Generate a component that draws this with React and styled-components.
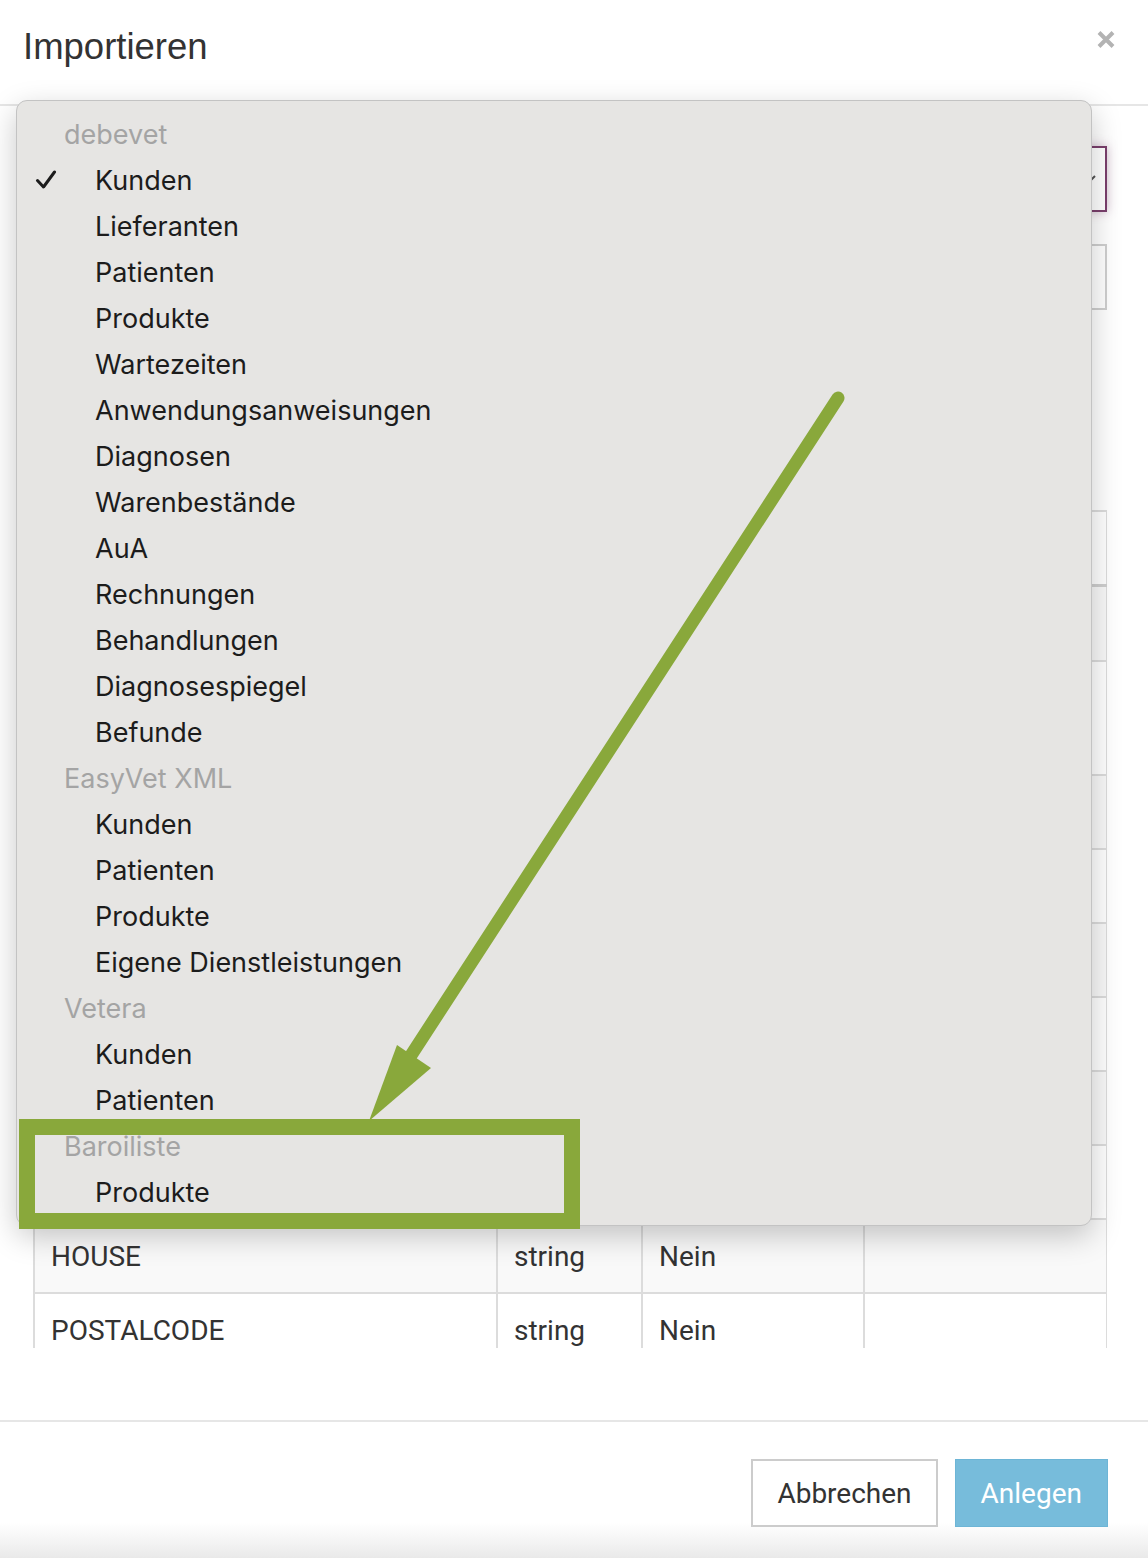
import React from 'react';
import styled, { createGlobalStyle } from 'styled-components';

const GlobalStyle = createGlobalStyle`
  html, body {
    margin: 0;
    padding: 0;
    background: #fff;
  }
  body {
    font-family: Roboto, "Liberation Sans", Arial, sans-serif;
    color: #333;
  }
  * {
    box-sizing: border-box;
  }
`;

const Page = styled.div`
  position: relative;
  width: 1148px;
  height: 1558px;
  overflow: hidden;
  background: #fff;
  display: flex;
  flex-direction: column;
`;

const Header = styled.header`
  height: 106px;
  border-bottom: 2px solid #e6e6e6;
  display: flex;
  justify-content: space-between;
  align-items: flex-start;
  padding: 25px 32px 0 23px;
`;

const Title = styled.h4`
  margin: 0;
  font-family: "Liberation Sans", Arial, sans-serif;
  font-weight: 400;
  font-size: 36.5px;
  line-height: 43px;
  color: #333;
`;

const CloseButton = styled.button`
  margin-top: 4px;
  padding: 0;
  border: 0;
  background: none;
  width: 20px;
  height: 21px;
  display: flex;
`;

const Body = styled.div`
  padding: 40px 41px 72px 33px;
  display: flex;
  flex-direction: column;
`;

const SelectBox = styled.div`
  height: 66px;
  border: 2px solid #7a3f6c;
  box-shadow: 0 0 10px rgba(122, 63, 108, 0.35);
  background: #fff;
  display: flex;
  align-items: center;
  justify-content: flex-end;
  padding-right: 8px;
`;

const InputBox = styled.div`
  margin-top: 32px;
  height: 66px;
  border: 2px solid #cfcfcf;
  background: #fff;
`;

const Spacer = styled.div`
  height: 200px;
`;

const TableWrap = styled.div`
  height: 838px;
  overflow: hidden;
`;

const Table = styled.table`
  width: 1073px;
  border-collapse: collapse;
  table-layout: fixed;
  font-size: 28px;
  color: #333;
`;

const Col = styled.col`
  width: ${({ $w }) => $w}px;
`;

const HeadCell = styled.th`
  height: 74px;
  text-align: left;
  font-weight: 700;
  padding: 0 16px;
  border: 2px solid #dcdcdc;
  border-bottom: 3px solid #cfcfcf;
`;

const Row = styled.tr`
  height: ${({ $h }) => $h}px;
  background: ${({ $striped }) => ($striped ? '#f9f9f9' : '#fff')};
`;

const Cell = styled.td`
  padding: 0 16px;
  border: 2px solid #dcdcdc;
  border-top: 2px solid #dcdcdc;
  vertical-align: middle;
`;

const Footer = styled.footer`
  flex: 1;
  border-top: 2px solid #e6e6e6;
  padding: 37px 40px 0 0;
  display: flex;
  justify-content: flex-end;
  align-items: flex-start;
  gap: 17px;
  background: linear-gradient(to bottom, #fff 0%, #fff 74%, #f4f4f4 88%, #e9e9e9 100%);
`;

const Button = styled.button`
  height: 68px;
  padding: 0 ${({ $primary }) => ($primary ? '25px' : '24px')};
  font-family: Roboto, "Liberation Sans", Arial, sans-serif;
  font-size: 28px;
  border: ${({ $primary }) => ($primary ? '1px solid #6db5d6' : '2px solid #cccccc')};
  background: ${({ $primary }) => ($primary ? '#77bcdb' : '#fff')};
  color: ${({ $primary }) => ($primary ? '#fff' : '#333')};
`;

const Menu = styled.div`
  position: absolute;
  left: 16px;
  top: 100px;
  width: 1076px;
  padding: 10px 0 10px;
  background: #e6e5e3;
  border: 1px solid #c3c3c3;
  border-radius: 11px;
  box-shadow: 0 10px 30px rgba(0, 0, 0, 0.22);
  font-family: Inter, "Noto Sans", sans-serif;
  font-size: 27px;
  z-index: 5;
`;

const MenuItem = styled.div`
  position: relative;
  height: 46px;
  display: flex;
  align-items: center;
  padding-left: ${({ $group }) => ($group ? '47px' : '78px')};
  color: ${({ $group }) => ($group ? '#a4a4a4' : '#1c1c1c')};
`;

const Check = styled.svg`
  position: absolute;
  left: 18px;
  top: 13px;
`;

const Highlight = styled.div`
  position: absolute;
  left: 19px;
  top: 1119px;
  width: 561px;
  height: 110px;
  border: 16px solid #89a83b;
  z-index: 6;
`;

const ArrowLayer = styled.svg`
  position: absolute;
  left: 0;
  top: 0;
  z-index: 7;
  pointer-events: none;
`;

const menu = [
  { group: 'debevet', items: ['Kunden', 'Lieferanten', 'Patienten', 'Produkte', 'Wartezeiten', 'Anwendungsanweisungen', 'Diagnosen', 'Warenbestände', 'AuA', 'Rechnungen', 'Behandlungen', 'Diagnosespiegel', 'Befunde'] },
  { group: 'EasyVet XML', items: ['Kunden', 'Patienten', 'Produkte', 'Eigene Dienstleistungen'] },
  { group: 'Vetera', items: ['Kunden', 'Patienten'] },
  { group: 'Baroiliste', items: ['Produkte'] },
];

// rows above HOUSE sit under the open menu, so they carry no visible text
const rows = [
  { name: '', type: '', req: '', h: 76 },
  { name: '', type: '', req: '', h: 114 },
  { name: '', type: '', req: '', h: 74 },
  { name: '', type: '', req: '', h: 74 },
  { name: '', type: '', req: '', h: 74 },
  { name: '', type: '', req: '', h: 74 },
  { name: '', type: '', req: '', h: 74 },
  { name: '', type: '', req: '', h: 74 },
  { name: 'HOUSE', type: 'string', req: 'Nein', h: 74 },
  { name: 'POSTALCODE', type: 'string', req: 'Nein', h: 74 },
];

export default function App() {
  return (
    <>
      <GlobalStyle />
      <Page>
        <Header>
          <Title>Importieren</Title>
          <CloseButton aria-label="Schließen">
            <svg width="20" height="21" viewBox="0 0 20 21">
              <path d="M3 3.5 L17 17.5 M17 3.5 L3 17.5" stroke="#b3b3b3" strokeWidth="4" />
            </svg>
          </CloseButton>
        </Header>

        <Body>
          <SelectBox>
            <svg width="16" height="10" viewBox="0 0 16 10">
              <path d="M2 2 L8 8 L14 2" fill="none" stroke="#555" strokeWidth="2" />
            </svg>
          </SelectBox>
          <InputBox />
          <Spacer />
          <TableWrap>
            <Table>
              <colgroup>
                <Col $w={463} />
                <Col $w={145} />
                <Col $w={222} />
                <Col $w={243} />
              </colgroup>
              <thead>
                <tr>
                  <HeadCell />
                  <HeadCell />
                  <HeadCell />
                  <HeadCell />
                </tr>
              </thead>
              <tbody>
                {rows.map((r, i) => (
                  <Row key={i} $h={r.h} $striped={i % 2 === 0}>
                    <Cell>{r.name}</Cell>
                    <Cell>{r.type}</Cell>
                    <Cell>{r.req}</Cell>
                    <Cell />
                  </Row>
                ))}
              </tbody>
            </Table>
          </TableWrap>
        </Body>

        <Footer>
          <Button>Abbrechen</Button>
          <Button $primary>Anlegen</Button>
        </Footer>

        <Menu>
          {menu.map((g) => (
            <React.Fragment key={g.group}>
              <MenuItem $group>{g.group}</MenuItem>
              {g.items.map((item, i) => (
                <MenuItem key={g.group + item}>
                  {g.group === 'debevet' && i === 0 && (
                    <Check width="22" height="20" viewBox="0 0 22 20">
                      <path d="M2.5 10.5 L8.5 17 L19.5 2" fill="none" stroke="#1c1c1c" strokeWidth="3" strokeLinecap="round" strokeLinejoin="round" />
                    </Check>
                  )}
                  {item}
                </MenuItem>
              ))}
            </React.Fragment>
          ))}
        </Menu>

        <Highlight />

        <ArrowLayer width="1148" height="1558" viewBox="0 0 1148 1558">
          <line x1="838" y1="398" x2="408" y2="1060" stroke="#89a83b" strokeWidth="13" strokeLinecap="round" />
          <polygon points="369,1121 397,1045 431,1068" fill="#89a83b" />
        </ArrowLayer>
      </Page>
    </>
  );
}
